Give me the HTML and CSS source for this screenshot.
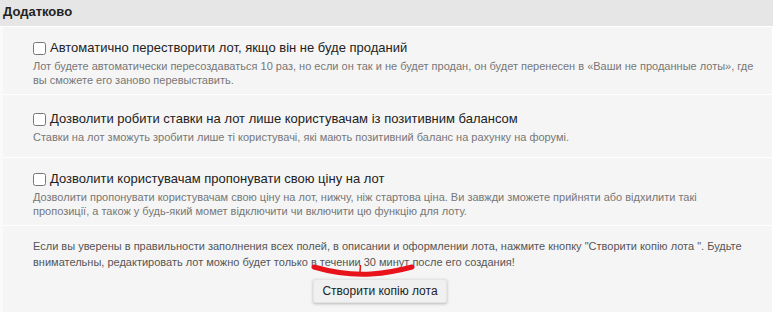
FILE: index.html
```html
<!DOCTYPE html>
<html lang="uk">
<head>
  <meta charset="UTF-8">
  <title>Додатково</title>
  <link rel="stylesheet" href="styles.css">
</head>
<body>
  <div class="section">
    <div class="section-head">Додатково</div>
    <div class="section-body">
      <div class="option">
        <label class="option-title"><input type="checkbox"> Автоматично перестворити лот, якщо він не буде проданий</label>
        <div class="option-desc">Лот будете автоматически пересоздаваться 10 раз, но если он так и не будет продан, он будет перенесен в «Ваши не проданные лоты», где вы сможете его заново перевыставить.</div>
      </div>
      <div class="option option-short">
        <label class="option-title"><input type="checkbox"> Дозволити робити ставки на лот лише користувачам із позитивним балансом</label>
        <div class="option-desc">Ставки на лот зможуть зробити лише ті користувачі, які мають позитивний баланс на рахунку на форумі.</div>
      </div>
      <div class="option">
        <label class="option-title"><input type="checkbox"> Дозволити користувачам пропонувати свою ціну на лот</label>
        <div class="option-desc">Дозволити пропонувати користувачам свою ціну на лот, нижчу, ніж стартова ціна. Ви завжди зможете прийняти або відхилити такі пропозиції, а також у будь-який момет відключити чи включити цю функцію для лоту.</div>
      </div>
      <div class="submit-box">
        <p class="note">Если вы уверены в правильности заполнения всех полей, в описании и оформлении лота, нажмите кнопку "Створити копію лота ". Будьте внимательны, редактировать лот можно будет только в течении 30 минут после его создания!</p>
        <div class="btn-row">
          <button class="btn">Створити копію лота</button>
        </div>
        <!-- червона позначка від руки -->
        <svg class="scribble" width="106" height="14" viewBox="0 0 106 14">
          <path d="M3 3 C 20 8, 40 11, 60 10 C 75 9, 90 6, 101 3" fill="none" stroke="#e8121b" stroke-width="5" stroke-linecap="round"/>
          <path d="M49 8 L 49.5 1" fill="none" stroke="#e8121b" stroke-width="1.5"/>
        </svg>
      </div>
    </div>
  </div>
</body>
</html>
```

FILE: styles.css
```css
body {
  margin: 0;
  font-family: 'Liberation Sans', Arial, sans-serif;
  background: #fff;
  color: #222;
}

.section-head {
  background: #e6e6e6;
  font-size: 13px;
  font-weight: bold;
  padding: 4px 3px 5px;
  height: 17px;
  border-bottom: 1px solid #fff;
}

.section-body {
  background: #f5f5f5;
  border-left: 3px solid #fafafa;
  border-right: 1px solid #fff;
}

.option {
  padding: 13px 18px 8px 30px;
  border-bottom: 1px solid #fff;
  height: 46px;
}
.option-short {
  padding-top: 16px;
  height: 38px;
}
.option:last-of-type {
  padding-right: 30px;
  height: 48px;
}

.option-title {
  display: flex;
  align-items: center;
  font-size: 13px;
  line-height: 16px;
  color: #222;
}
.option-title input {
  margin: 0 4px 0 0;
  width: 13px;
  height: 13px;
}

.option-desc {
  font-size: 11px;
  line-height: 14px;
  color: #777;
  margin-top: 3px;
}

.submit-box {
  position: relative;
  padding: 12px 30px 9px;
}

.note {
  margin: 0 0 9px;
  font-size: 11px;
  line-height: 16px;
  color: #555;
}

.btn-row {
  text-align: center;
  padding-right: 15px;
}

.btn {
  font-family: inherit;
  font-size: 12px;
  line-height: 14px;
  color: #222;
  background: #f0f0f0;
  border: 1px solid #e4e4e4;
  border-radius: 2px;
  padding: 4px 8px;
  box-shadow: 0 1px 3px rgba(0, 0, 0, 0.25);
  cursor: pointer;
}

.scribble {
  position: absolute;
  left: 308px;
  top: 38px;
}
```
